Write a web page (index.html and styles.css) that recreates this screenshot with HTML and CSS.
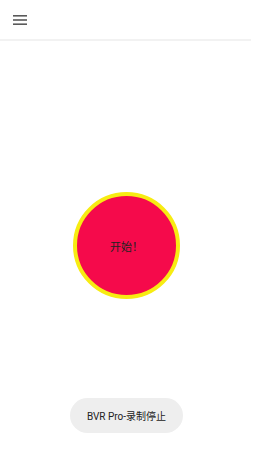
FILE: index.html
```html
<!DOCTYPE html>
<html lang="zh">
<head>
  <meta charset="UTF-8" />
  <meta name="viewport" content="width=device-width, initial-scale=1.0" />
  <title>BVR Pro</title>
  <link rel="stylesheet" href="styles.css">
</head>
<body>
  <header class="topbar">
    <button class="menu-btn" aria-label="菜单">
      <svg width="14" height="11" viewBox="0 0 14 11">
        <rect x="0" y="0" width="14" height="1.6" fill="#5a5a5a" />
        <rect x="0" y="4.2" width="14" height="1.6" fill="#5a5a5a" />
        <rect x="0" y="8.4" width="14" height="1.6" fill="#5a5a5a" />
      </svg>
    </button>
  </header>

  <main class="stage">
    <button class="start-btn">开始！</button>
  </main>

  <!-- 底部悬浮按钮 -->
  <button class="stop-btn">BVR Pro-录制停止</button>
</body>
</html>
```

FILE: styles.css
```css
body {
  margin: 0;
  height: 450px;
  display: flex;
  flex-direction: column;
  background: #fff;
  font-family: Roboto, "Noto Sans CJK SC", sans-serif;
  color: #222;
}
.topbar {
  height: 39px;
  flex: none;
  display: flex;
  align-items: center;
  border-bottom: 2px solid #f2f2f2;
  margin-right: 2px;
}
.menu-btn {
  border: none;
  background: none;
  padding: 0;
  margin-left: 13px;
  margin-top: 1px;
  display: flex;
}
.stage {
  flex: 1;
  display: flex;
  align-items: center;
  justify-content: center;
}
.start-btn {
  width: 107px;
  height: 107px;
  box-sizing: border-box;
  border-radius: 50%;
  border: 4px solid #f7ec12;
  background: #f50a4b;
  color: #222;
  font-family: inherit;
  font-size: 11px;
  padding: 0;
}
.stop-btn {
  position: fixed;
  left: 70px;
  top: 398px;
  width: 113px;
  height: 35px;
  border: none;
  border-radius: 18px;
  background: #eeeeee;
  color: #222;
  font-family: inherit;
  font-size: 10px;
  padding: 0;
}
```
